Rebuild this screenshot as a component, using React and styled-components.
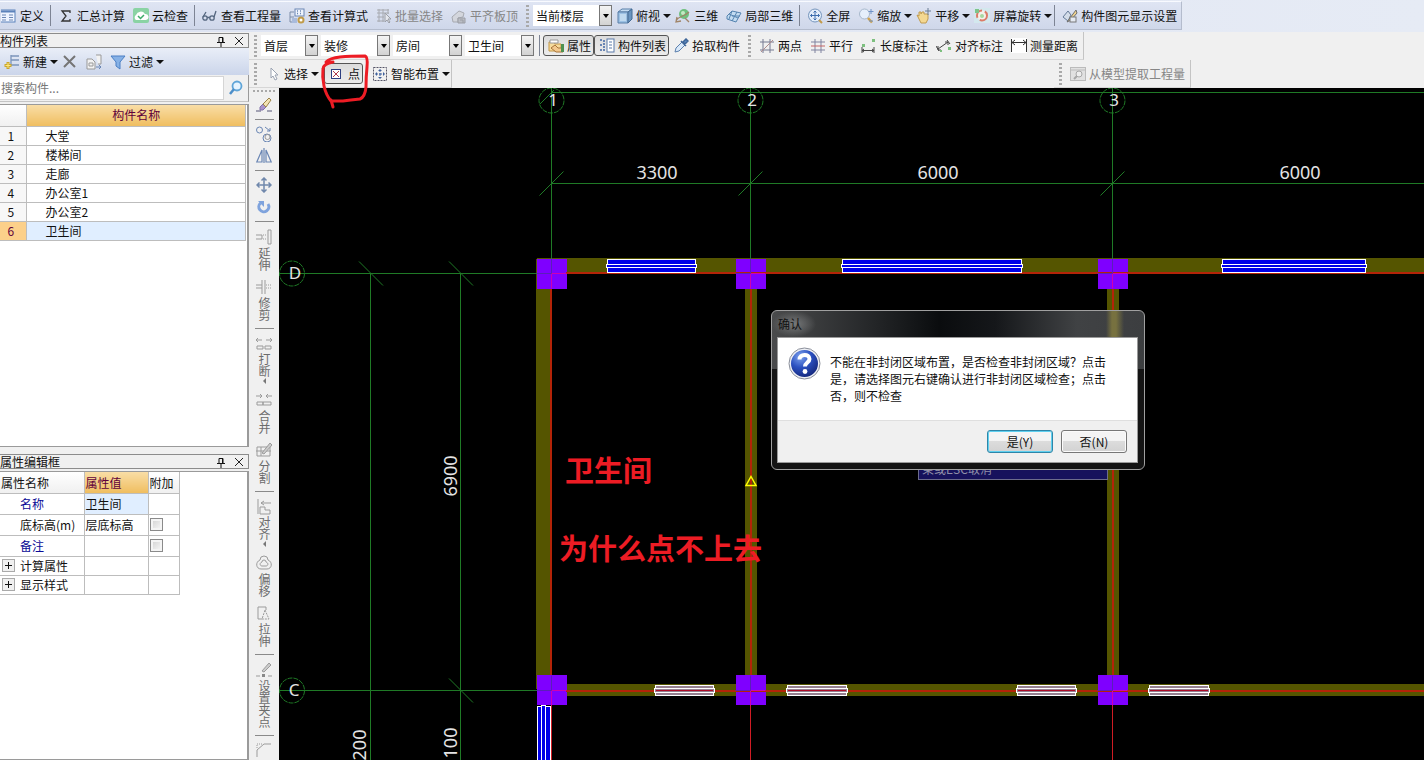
import React from "react"
import styled, { createGlobalStyle, css } from "styled-components";

const GlobalStyle = createGlobalStyle`
    * { box-sizing : border-box; }
    body {
        margin : 0;
        background : #f0f0f0;
    }
    body, button, input, select, table {
        font-family : "Noto Sans CJK SC", "Liberation Sans", sans-serif;
        font-size : 12px;
        line-height : 16px;
        color : #111;
    }
`;

const Window = styled.div`
    display : flex;
    flex-direction : column;
    height : 100vh;
    overflow : hidden;
`;

const Main = styled.div`
    display : flex;
    flex : 1;
    min-height : 0;
`;

const MenuStrip = styled.header`
    display : flex;
    padding : 1px 0 2px;
    background : linear-gradient(90deg, #dde3f2, #e6ebf5);
`;

const ViewBar = styled.div`
    display : flex;
    align-items : center;
    height : 29px;
    min-width : 0;
    margin-left : -3px;
    white-space : nowrap;
    background : linear-gradient(#dfe5f3, #cfd7ea);
    border-top : 1px solid #f8faff;
    border-right : 1px solid #b4bccd;
    border-bottom : 1px solid #b4bccd;
`;

const ToolItem = styled.button`
    display : flex;
    align-items : center;
    flex : none;
    gap : 3px;
    height : 24px;
    padding : 0 ${p => p.$menu ? "0" : "4px"} 0 4px;
    border : 0;
    background : none;
    white-space : nowrap;
    color : ${p => p.$off ? "#868686" : "#111"};
    svg { flex : none; opacity : ${p => p.$off ? 0.6 : 1}; }
    ${p => p.$down && css`
        height : 21px;
        padding : 0 2px 0 4px;
        border : 1px solid #555;
        border-radius : 3px;
        background : linear-gradient(#dcdcdc, #ececec);
    `}
`;

const Caret = styled.span`
    width : 0;
    height : 0;
    border : 4px solid transparent;
    border-width : 4px 4px 0;
    border-top-color : #111;
`;

const Divider = styled.span`
    flex : none;
    width : 1px;
    height : 21px;
    margin : 0 3px 0 2px;
    background : #7d8494;
`;

const Grip = styled.span`
    flex : none;
    width : 3px;
    height : 22px;
    margin : 0 4px;
    background : repeating-linear-gradient(#a9a9a9 0 2px, transparent 2px 4px);
`;

const Combo = styled.label`
    position : relative;
    display : block;
    flex : none;
    width : ${p => p.$short ? "57px" : "69px"};
    margin-right : 3px;
    select {
        appearance : none;
        display : block;
        width : 100%;
        height : 21px;
        padding : 0 14px 0 3px;
        border : 0;
        border-radius : 0;
        background : #fff;
    }
    span {
        position : absolute;
        top : 0;
        right : 0;
        width : 13px;
        height : 21px;
        display : flex;
        align-items : center;
        justify-content : center;
        border : 1px solid #777;
        background : linear-gradient(#f4f4f4, #d2d2d2);
        pointer-events : none;
    }
    i {
        border : 3px solid transparent;
        border-width : 4px 3px 0;
        border-top-color : #000;
    }
`;

const FloorCombo = styled(Combo)`
    width : 79px;
    margin-right : 1px;
`;

const Work = styled.div`
    display : flex;
    flex-direction : column;
    flex : 1;
    min-width : 0;
`;

const Row = styled.div`
    display : flex;
    align-items : center;
    flex : none;
    height : 28px;
    justify-content : space-between;
    padding-right : ${p => p.$inset ? "233px" : "0"};
`;

const Strip = styled.div`
    display : flex;
    align-items : center;
    height : 28px;
    padding : 0 1px;
    border-right : 1px solid #c4c4c4;
    border-bottom : 1px solid #d6d6d6;
`;

const Marked = styled.div`
    position : relative;
    margin : 0 5px;
`;

const RedMark = styled.svg`
    position : absolute;
    z-index : 2;
    top : -10px;
    left : -6px;
    pointer-events : none;
`;

const Stage = styled.div`
    display : flex;
    flex : 1;
    min-height : 0;
`;

const SideBar = styled.nav`
    display : flex;
    flex-direction : column;
    align-items : center;
    flex : none;
    width : 30px;
    overflow : hidden;
    padding-top : 2px;
`;

const SideGrip = styled.span`
    flex : none;
    width : 22px;
    height : 2px;
    margin-bottom : 2px;
    background : repeating-linear-gradient(90deg, #a9a9a9 0 2px, transparent 2px 4px);
`;

const SideItem = styled.button`
    display : flex;
    flex : none;
    align-items : center;
    gap : ${p => p.$menu ? "1px" : "2px"};
    padding : ${p => p.$plain ? "3px" : "4px"} 0;
    border : 0;
    background : none;
    writing-mode : vertical-rl;
    text-orientation : upright;
    color : #6c6c6c;
    svg { flex : none; }
`;

const SideCaret = styled.span`
    border : 2px solid transparent;
    border-width : 3px 3px 3px 0;
    border-right-color : #777;
`;

const SideLine = styled.span`
    flex : none;
    width : 19px;
    height : 1px;
    margin : 3px 0;
    background : #8a8a8a;
`;

const Docks = styled.aside`
    display : flex;
    flex-direction : column;
    flex : none;
    width : 249px;
    padding-top : 1px;
    gap : 7px;
`;

const Dock = styled.section`
    display : flex;
    flex-direction : column;
    flex : ${p => p.$grow ? "1" : "none"};
    height : ${p => p.$grow ? "auto" : "57%"};
    min-height : 0;
`;

const DockTitle = styled.div`
    display : flex;
    align-items : center;
    flex : none;
    height : 15px;
    border : 1px solid #8c8c8c;
    border-left : 0;
    h2 {
        flex : 1;
        margin : 0;
        font-size : 12px;
        font-weight : normal;
    }
`;

const TitleButton = styled.button`
    display : flex;
    padding : 0;
    margin-right : 3px;
    border : 0;
    background : none;
    & + & { margin-left : 3px; }
`;

const DockBar = styled.div`
    display : flex;
    align-items : center;
    flex : none;
    height : 27px;
    background : linear-gradient(#e9eef8, #cbd5ea);
`;

const Search = styled.div`
    display : flex;
    align-items : center;
    flex : none;
    height : 27px;
    border-right : 1px solid #9a9a9a;
    border-bottom : 1px solid #c4c4c4;
    input {
        flex : 1;
        min-width : 0;
        height : 24px;
        padding : 0 0 2px 1px;
        border : 1px solid #d5d5d5;
        border-left : 0;
    }
    input::placeholder { color : #777; opacity : 1; }
    button {
        display : flex;
        padding : 0 4px;
        border : 0;
        background : none;
    }
`;

const DockBody = styled.div`
    flex : 1;
    min-height : 0;
    overflow : hidden;
    background : #fff;
    border : 1px solid #9a9a9a;
    border-left : 0;
    border-right : 2px solid #9a9a9a;
    margin-top : 2px;
`;

const Grid = styled.table`
    border-collapse : collapse;
    table-layout : fixed;
    width : ${p => p.$wide ? "246px" : "179px"};
    th, td {
        height : 19px;
        padding : 0;
        border : 1px solid #bdbdbd;
        border-left : 0;
        font-weight : normal;
        text-align : left;
        white-space : nowrap;
    }
    thead th {
        height : 21px;
        padding-left : 1px;
        border-top : 0;
        background : linear-gradient(#fff, #f0f0f0);
    }
`;

const HotHead = styled.th`
    && {
        background : linear-gradient(#f9dda6, #efbe60);
        color : #60003a;
        text-align : ${p => p.$center ? "center" : "left"};
    }
`;

const NumCell = styled.th`
    && {
        padding-right : 4px;
        text-align : center;
        background : ${p => p.$on ? "#fcd08a" : "#f7f7f7"};
        color : ${p => p.$on ? "#60003a" : "#111"};
    }
`;

const NameCell = styled.td`
    && {
        padding-left : 19px;
        background : ${p => p.$on ? "#e0eeff" : "#fff"};
    }
`;

const PropRow = styled.tr`
    && td { height : ${p => p.$low ? "19px" : "21px"}; }
`;

const PropName = styled.td`
    color : ${p => p.$link ? "#0a0a96" : "#111"};
    div {
        display : flex;
        align-items : center;
        gap : 5px;
        padding-left : ${p => p.$tree ? "2px" : "20px"};
    }
`;

const PropValue = styled.td`
    && {
        padding-left : 1px;
        background : ${p => p.$on ? "#e0eeff" : "#fff"};
    }
`;

const Expand = styled.button`
    display : flex;
    padding : 0;
    border : 1px solid #aaa;
    background : #f0f0f0;
`;

const Check = styled.input`
    appearance : none;
    display : block;
    width : 13px;
    height : 13px;
    margin : 0 0 0 1px;
    border : 1px solid #8a8a8a;
    background : linear-gradient(135deg, #cfcfcf, #fafafa);
    box-shadow : inset 0 0 0 2px #f4f4f4;
`;

const Canvas = styled.main`
    position : relative;
    flex : 1;
    min-width : 0;
    overflow : hidden;
    background : #000;
`;

const Drawing = styled.svg`
    display : block;
    width : 100%;
    height : 100%;
    text { font-family : "Noto Sans", "Noto Sans CJK SC", sans-serif; }
`;

const Hint = styled.div`
    position : absolute;
    left : 639px;
    top : 368px;
    width : 190px;
    height : 24px;
    padding : 4px 3px 0;
    border : 1px solid #6c6c8c;
    background : #16125c;
    color : #8f8fa8;
    line-height : 16px;
`;

const Dialog = styled.div`
    position : absolute;
    left : 492px;
    top : 222px;
    width : 374px;
    padding : 0 6px 6px 5px;
    border : 1px solid #a0a0a0;
    border-radius : 6px;
    background :
        linear-gradient(90deg, transparent 334px, #77713f 340px, #77713f 344px, transparent 352px) 0 0 / 100% 27px no-repeat,
        linear-gradient(90deg, #4a4b4c, #232527 28%, #0a0c0e 45%, #15171a 60%, #404244 82%, #3c3e40) 0 0 / 100% 58px no-repeat,
        #141414;
`;

const DialogTitle = styled.h1`
    display : inline-block;
    margin : 0 -5px;
    padding : 5px 14px 5px 6px;
    height : 26px;
    font-size : 12px;
    font-weight : normal;
    border-radius : 12px;
    background : radial-gradient(closest-side, #77797a, transparent);
`;

const DialogBody = styled.div`
    border : 1px solid #9a9a9a;
    background : #f0f0f0;
`;

const Message = styled.div`
    display : flex;
    gap : 9px;
    padding : 9px 24px 16px 10px;
    background : #fff;
    border-bottom : 1px solid #dfdfdf;
    svg { flex : none; }
    p {
        margin : 6px 0 0;
        line-height : 17px;
    }
`;

const Actions = styled.div`
    display : flex;
    justify-content : flex-end;
    gap : 8px;
    padding : 9px 10px;
`;

const DialogButton = styled.button`
    width : 66px;
    height : 23px;
    padding : 0;
    border : 1px solid ${p => p.$main ? "#2f86a8" : "#777"};
    border-radius : 3px;
    background : linear-gradient(#f4f4f4 45%, #dcdcdc 50%, #d2d2d2);
    box-shadow : inset 0 0 0 1px ${p => p.$main ? "#5fd0f0" : "#fbfbfb"};
`;

const g = "#9b9b9b";
const b = "#6a86b4";

const icons = {
    define: <><rect x="-3" y="2" width="17" height="12" fill="#eef4ff" stroke="#5c83bb" /><path d="M-3 3.500H14" stroke="#5c83bb" strokeWidth="2" /><path d="M1 7h4M1 9.500h4M1 12h4M8 7h4M8 9.500h4M8 12h4" stroke={b} /></>,
    sum: <path d="M12 5V3H4l4 5-4 5h8v-2" fill="none" stroke="#333" strokeWidth="1.300" />,
    cloud: <><rect y="0" width="16" height="15" rx="2" fill="#8ad3a4" /><path d="M3 12a3 3 0 0 1 0-5 5 5 0 0 1 9-1 3 3 0 0 1 1 6z" fill="#fff" /><path d="M5 8l2.500 2.500L11 7" fill="none" stroke="#3caa68" strokeWidth="1.500" /></>,
    glasses: <g fill="none" stroke="#54667f" strokeWidth="1.300"><circle cx="3" cy="10" r="2.200" /><circle cx="10" cy="10" r="2.200" /><path d="M5.200 9.500h2.600M1 9l3-5M12 9l2-6" /></g>,
    formula: <><path d="M1 4v10M1 4h4M1 9h4M1 14h4" stroke="#7c8da8" fill="none" /><rect x="6" y="1" width="9" height="7" fill="#eef3fc" stroke={b} /><path d="M8 3h1M11 3h1M8 5.500h1M11 5.500h1" stroke={b} strokeWidth="1.500" /><rect x="3" y="10" width="5" height="5" fill="#a9bbdc" /><circle cx="12" cy="12" r="2.500" fill="#fff" stroke="#c09b49" strokeWidth="2" /></>,
    batch: <><path d="M1 2h12M1 5h12M1 9h7M1 13h7M3 1v13M7 1v13M12 1v5" stroke="#888" fill="none" /><path d="M9 5v9l2-2 2 3 1-1-2-3h3z" fill="#eee" stroke="#777" /></>,
    slab: <><path d="M1 9l7-6 5 2-1 4-5 1v4H2z" fill="#d2d2d2" stroke="#888" /><path d="M7 10h7v5H7zM9 12h3v3" fill="#aaa" stroke="#777" /></>,
    cube: <><path d="M1 4l4-3h10l-4 3z" fill="#c4dcf2" stroke="#587fa8" /><path d="M1 4h10v11H1z" fill="#9cc1e4" stroke="#587fa8" /><path d="M11 4l4-3v10l-4 4z" fill="#6a95c0" stroke="#446b93" /><path d="M3 6h6v7H3z" fill="#c0daf0" /></>,
    orbit: <><circle cx="9" cy="6" r="5" fill="#6fc07e" /><circle cx="8" cy="5" r="2" fill="#c4e9c4" /><path d="M1 13c2-5 8-4 13-9M2 9l-1 5 5-1M10 10l4 4" stroke="#a08468" strokeWidth="1.300" fill="none" /></>,
    local3d: <><path d="M1 8l5-5 9 2-5 9-9-3z" fill="#c3dcf2" stroke="#5684b0" /><path d="M3 6l9 4M6 3L3 11M11 4L6 13M6 8l8 0" stroke="#5684b0" fill="none" /></>,
    full: <><circle cx="8" cy="7.500" r="6.500" fill="#e3eefb" stroke="#7796bd" /><path d="M8 3v9M3.500 7.500h9M6.500 4.500L8 3l1.500 1.500M6.500 10.500L8 12l1.500-1.500M5 6L3.500 7.500 5 9M11 6l1.500 1.500L11 9" stroke="#3f6fae" fill="none" /><path d="M12 12l3 3" stroke="#c39a4a" strokeWidth="2" /></>,
    zoom: <><circle cx="6.500" cy="6" r="5" fill="#e6effb" stroke="#a8b8cc" /><path d="M10 10l4 4.500" stroke="#cfa24c" strokeWidth="2.500" /><path d="M13 1v5M10.500 3.500h5M11 13h4" stroke="#6f92c6" /></>,
    hand: <><path d="M1 7l2 1V4h2v2l1-2h2v2h4v5l-2 4H5z" fill="#f4d891" stroke="#c09b50" /><path d="M12 0v7M9 3h6" stroke="#6b7c93" /></>,
    rotate: <><rect width="16" height="15" fill="#d3e8ee" /><circle cx="8" cy="7.500" r="5" fill="#f4f1ea" stroke="#dc7b67" strokeWidth="2" strokeDasharray="10 3" /><circle cx="8" cy="8" r="2" fill="#a8d8a0" /><path d="M1 1h4v4H1z" fill="#7fc48b" /></>,
    display: <><path d="M1 9l5-6 3 4-3 6z" fill="#d4dde9" stroke="#667b98" /><path d="M5 14l9-12 1 3-6 7z" fill="#f0d38d" stroke="#6d6d6d" /><rect x="8" y="9" width="6" height="5" fill="#e5eaf2" stroke="#777" /></>,
    props: <><path d="M1 13V4h5l1 2h6v7z" fill="#f6dc9d" stroke="#c59742" /><path d="M2 2h8v3H2z" fill="#fff" stroke="#999" /><path d="M3 10l4-3 3 3h5v4H8z" fill="#f3c98e" stroke="#a8743a" /><path d="M13 6h3v8h-3z" fill="#4e9150" /></>,
    list: <><path d="M1 2h2M1 7h2M1 12h2M5 2v12" stroke={b} strokeWidth="2" strokeDasharray="2 1" /><rect x="8" y="1" width="7" height="13" fill="#fff" stroke="#5b7ba9" /><path d="M10 4h3M10 7h3M10 10h3" stroke="#5b7ba9" /></>,
    picker: <><path d="M2 14l1-4 6-6 3 3-6 6z" fill="#d9e9fa" stroke="#5c80ad" /><path d="M8 3l5 5M10 4l3-3 2 2-3 3z" stroke="#3d6598" fill="#5f8ac0" strokeWidth="1.500" /></>,
    twoPoint: <><path d="M4 1v14M11 1v14M1 4h14M1 12h14" stroke="#777a92" fill="none" /><path d="M2 14L14 2" stroke="#b08c8c" /></>,
    parallel: <><path d="M5 1v14M11 1v14M1 4h14M1 12h14" stroke="#8084a0" fill="none" /><path d="M1 8h14" stroke="#c46464" /></>,
    length: <><path d="M1 9v6M13 9v6M1 12.500h12M3 11l-2 1.500L3 14M11 11l2 1.500L11 14" stroke="#444" fill="none" /><path d="M1 6h3v3H1zM11 1h3v3h-3z" fill="#7dc07f" /></>,
    align: <><path d="M0 8l3 5M11 2l3 4M2 11l10-7M2 8v4h3M9 4h3v3" stroke="#444" fill="none" /><path d="M12 9h3v3h-3zM4 12h2v2H4z" fill="#7dc07f" /></>,
    measure: <><path d="M0 0h16v15H0z" fill="#fff" /><path d="M.5 1v13M15.500 1v13M1 4.500h14M4 2L1 4.500 4 7M12 2l3 2.500L12 7" stroke="#333" fill="none" /></>,
    cursor: <path d="M6 2v10l2-2 2 4 2-1-2-4h3z" fill="#fff" stroke="#9aa3b2" />,
    point: <><rect x="2.500" y="3.500" width="9" height="9" fill="#fff" stroke="#2e3f80" /><path d="M4 5l6 6M10 5l-6 6" stroke="#b03a4a" /></>,
    smart: <><rect x="1.500" y="1.500" width="13" height="13" fill="none" stroke="#556" strokeDasharray="2 1" /><path d="M8 3v10M3 8h10M6.500 4.500h3M6.500 11.500h3M4.500 6.500v3M11.500 6.500v3" stroke="#3d5f9b" strokeDasharray="3 1" /></>,
    model: <><rect x=".5" y="1.500" width="15" height="13" fill="#d8d8d8" stroke="#999" /><path d="M1 4h14" stroke="#999" /><circle cx="9" cy="8" r="3" fill="#eee" stroke="#777" /><path d="M7 10l-3 3" stroke="#777" strokeWidth="2" /></>,
    add: <><path d="M7 1v10M7 2h8M7 6h8M7 11h8" stroke="#7c95bb" fill="none" strokeWidth="1.300" /><path d="M4 8v7M.5 11.500h7" stroke="#caa62e" strokeWidth="3" /><path d="M4 9v5M1.500 11.500h5" stroke="#ffe97b" /></>,
    remove: <path d="M2 2l11 11M13 2L2 13" stroke="#757575" strokeWidth="2" />,
    copyPage: <><path d="M1 5h5l3 3v7H1zM10 1h5v9h-3" fill="#f2f2f2" stroke="#999" /><path d="M3 9h4v3H3z" fill="none" stroke="#999" /><path d="M10 13h4M13 11l2 2-2 2" stroke={b} fill="none" /></>,
    filter: <path d="M1 2h14l-5 6v7l-4-3V8z" fill="#86b1e6" stroke="#4a7fc4" />,
    find: <><circle cx="9" cy="6" r="4.500" fill="#e6f4ff" stroke="#5fa5d8" strokeWidth="1.800" /><path d="M6 9l-4 5" stroke="#4c8fca" strokeWidth="2.500" /></>,
    erase: <><path d="M0 14h5M11 14h5" stroke="#557" /><path d="M4 10l3-3 3 3-3 3H4z" fill="#a893cc" stroke="#8070a8" /><path d="M7 7l6-6 2 2-5 7z" fill="#f3e3b4" stroke="#9a8348" /></>,
    copy: <g fill="none" stroke={b}><circle cx="3.500" cy="4" r="3" /><circle cx="11" cy="12" r="4" /><circle cx="11.500" cy="11" r="2.500" stroke={g} /><path d="M9 1l5 4M14 2v3h-3" /></g>,
    mirror: <path d="M6 2v12H.800zM10 2v12h5.200zM8 0v15" fill="none" stroke={b} strokeWidth="1.200" />,
    move: <path d="M8 1v14M1 8h14M5.500 3.500L8 1l2.500 2.500M5.500 12.500L8 15l2.500-2.500M3.500 5.500L1 8l2.500 2.500M12.500 5.500L15 8l-2.500 2.500" fill="none" stroke="#7088ac" strokeWidth="1.500" />,
    spin: <><path d="M4.500 4a5 5 0 1 0 7.500 1" fill="none" stroke="#7fa3dd" strokeWidth="3" /><path d="M2 2h6v6z" fill="#7fa3dd" /></>,
    extend: <path d="M0 6h6v4H0M7 6h1M9 6h1M7 10h1M9 10h1M12 1h3v14h-3z" fill="none" stroke={g} />,
    trim: <path d="M6 1v14M9 1v14M0 6h6M0 9h6M10 6h1M12 6h1M14 6h1M10 9h1M12 9h1M14 9h1" fill="none" stroke={g} />,
    breakIt: <path d="M0 4h6M10 4h6M2 2L0 4l2 2M14 2l2 2-2 2M1 10h6v3H1zM9 10h6v3H9z" fill="none" stroke={g} />,
    merge: <path d="M0 4h6M10 4h6M4 2l2 2-2 2M12 2l-2 2 2 2M1 10h6v3H1zM7 10h8v3H7z" fill="none" stroke={g} />,
    split: <><path d="M1 5h13v9H1zM0 9h15M5 5v9" fill="none" stroke={g} /><path d="M6 11l8-10 2 2-8 9z" fill="#ccc" stroke={g} /></>,
    alignSide: <path d="M2 0v15M5 4h10M8 2L5 4l3 2M4 8h5v3h5v4H4z" fill="none" stroke={g} />,
    offset: <g fill="none" stroke={g}><path d="M4 5a4 4 0 0 1 8 0c5 2 4 9-1 9H5C0 14-1 7 4 5z" /><path d="M6 7a2 2 0 0 1 4 0c3 1 2 4 0 4H6c-2 0-3-3 0-4z" /></g>,
    stretch: <><path d="M2 14V2h8v3M2 14h4" fill="none" stroke={g} /><path d="M9 5l4 9H6z" fill="none" stroke={g} strokeDasharray="2 1" /></>,
    grip: <><path d="M0 14h4M12 14h4" stroke={g} /><path d="M6 9l7-8 2 2-7 7z" fill="#ccc" stroke={g} /><rect x="6" y="12" width="3" height="3" fill="#888" /></>,
    corner: <><path d="M1 15V8l7-6h7" fill="none" stroke={g} /><path d="M1 6V2h5" fill="none" stroke={g} strokeDasharray="1 1" /></>,
};

function Icon({ name }) {
    return <svg width="16" height="16" viewBox="0 0 16 16" aria-hidden="true">{icons[name]}</svg>
}

function Tool({ icon, text, menu, off, down }) {
    return (
        <ToolItem type="button" $menu={menu} $off={off} $down={down} disabled={off} aria-label={text || icon}>
            <Icon name={icon} />
            {text}
            {menu && <Caret />}
        </ToolItem>
    )
}

function Pick({ name, value, short, as: Box = Combo }) {
    return (
        <Box $short={short}>
            <select aria-label={name} defaultValue={value}>
                <option>{value}</option>
            </select>
            <span><i /></span>
        </Box>
    )
}

function Side({ icon, text, menu }) {
    return (
        <SideItem type="button" $plain={!text} $menu={menu} aria-label={text || icon}>
            <Icon name={icon} />
            {text}
            {menu && <SideCaret />}
        </SideItem>
    )
}

function DockHead({ title }) {
    return (
        <DockTitle>
            <h2>{title}</h2>
            <TitleButton type="button" aria-label="固定">
                <svg width="12" height="12" viewBox="0 0 12 12"><path d="M4 7V2.500h4V7M2 7.500h8M6 8v4M7.500 2v5" fill="none" stroke="#111" /></svg>
            </TitleButton>
            <TitleButton type="button" aria-label="关闭">
                <svg width="12" height="12" viewBox="0 0 12 12"><path d="M2 2l8 8M10 2l-8 8" stroke="#222" /></svg>
            </TitleButton>
        </DockTitle>
    )
}

const rooms = ["大堂", "楼梯间", "走廊", "办公室1", "办公室2", "卫生间"];

function ComponentList() {
    return (
        <Dock>
            <DockHead title="构件列表" />
            <DockBar>
                <Tool icon="add" text="新建" menu />
                <Tool icon="remove" />
                <Tool icon="copyPage" />
                <Tool icon="filter" text="过滤" menu />
            </DockBar>
            <Search>
                <input type="text" placeholder="搜索构件..." aria-label="搜索构件" />
                <button type="button" aria-label="搜索"><Icon name="find" /></button>
            </Search>
            <DockBody>
                <Grid $wide>
                    <colgroup><col width="26" /><col /></colgroup>
                    <thead>
                        <tr><th></th><HotHead $center>构件名称</HotHead></tr>
                    </thead>
                    <tbody>
                        {rooms.map((room, i) => (
                            <tr key={room}>
                                <NumCell $on={i === 5}>{i + 1}</NumCell>
                                <NameCell $on={i === 5}>{room}</NameCell>
                            </tr>
                        ))}
                    </tbody>
                </Grid>
            </DockBody>
        </Dock>
    )
}

const attrs = [
    { name: "名称", value: "卫生间", link: true, on: true },
    { name: "底标高(m)", value: "层底标高", check: true },
    { name: "备注", link: true, check: true },
    { name: "计算属性", tree: true },
    { name: "显示样式", tree: true },
];

function PropertyEditor() {
    return (
        <Dock $grow>
            <DockHead title="属性编辑框" />
            <DockBody>
                <Grid>
                    <colgroup><col width="84" /><col width="64" /><col width="31" /></colgroup>
                    <thead>
                        <tr><th>属性名称</th><HotHead>属性值</HotHead><th>附加</th></tr>
                    </thead>
                    <tbody>
                        {attrs.map(a => (
                            <PropRow key={a.name} $low={a.tree}>
                                <PropName $link={a.link} $tree={a.tree}>
                                    <div>
                                        {a.tree && (
                                            <Expand type="button" aria-label={a.name}>
                                                <svg width="11" height="11"><path d="M2 5.500h7M5.500 2v7" stroke="#111" /></svg>
                                            </Expand>
                                        )}
                                        {a.name}
                                    </div>
                                </PropName>
                                <PropValue $on={a.on}>{a.value}</PropValue>
                                <td>{a.check && <Check type="checkbox" aria-label={a.name} />}</td>
                            </PropRow>
                        ))}
                    </tbody>
                </Grid>
            </DockBody>
        </Dock>
    )
}

const axes = [[272.5, "1"], [471.5, "2"], [833.5, "3"]];
const rows = [[185.5, "D"], [602.5, "C"]];
const topWindows = [[328, 89], [563, 180], [943, 144]];
const lowWindows = [[376, 59], [508, 60], [738, 59], [870, 60]];

function Plan() {
    return (
        <Drawing>
            {/* 墙 */}
            <g fill="#555500">
                <rect x="258" y="170" width="2000" height="15" />
                <rect x="257" y="171" width="15" height="430" />
                <rect x="466" y="185" width="12" height="415" />
                <rect x="828" y="185" width="12" height="415" />
                <rect x="272" y="596" width="2000" height="12" />
            </g>
            {/* 轴网 */}
            <g stroke="#1f7a26" fill="none">
                <path d="M272 4.500H2000M272 95.500H2000M91.500 185V2000M181.500 185V2000" />
                {axes.map(([x, label]) => (
                    <g key={label}>
                        <circle cx={x} cy="12.500" r="12.500" strokeDasharray="5 1" />
                        <path d={`M${x} 0V171M${x - 12} 107.500l24-24`} />
                    </g>
                ))}
                {rows.map(([y, label]) => (
                    <g key={label}>
                        <circle cx="13" cy={y} r="12.500" strokeDasharray="5 1" />
                        <path d={`M0 ${y}H258M170 ${y - 12}l24 24`} />
                    </g>
                ))}
                <path d="M80 173.500l24 24M261 16l14-14" />
            </g>
            {/* 柱 */}
            {axes.map(([x]) => [171, 587].map(y => (
                <rect key={x + "-" + y} x={Math.floor(x) - 14} y={y} width="30" height="30" fill="#7f00ff" />
            )))}
            {/* 墙中线 */}
            <g stroke="#b42408" strokeWidth="2" fill="none">
                <path d="M287 185H2000M272 201V587M472 201V587M834 201V587M287 603H2000" />
                <path d="M272.500 617V2000M471.500 617V2000M833.500 617V2000" stroke="#d01c24" strokeWidth="1" />
            </g>
            {axes.map(([x]) => rows.map(([y]) => (
                <g key={x + "-" + y} fill="none">
                    <path d={`M${x} ${y}v15M${x} ${y}h15`} stroke="#d000b0" />
                    <path d={`M${x} ${y}v-15M${x} ${y}h-15`} stroke="#5a20b8" />
                </g>
            )))}
            {/* 窗 */}
            {topWindows.map(([x, w]) => (
                <g key={x} stroke="#fff">
                    <rect x={x + 0.5} y="171.500" width={w - 1} height="13" fill="#0000e8" />
                    <rect x={x - 0.5} y="176.500" width={w + 1} height="3" fill="#0000e8" />
                </g>
            ))}
            {lowWindows.map(([x, w]) => (
                <g key={x} stroke="#fff">
                    <rect x={x + 0.5} y="597.500" width={w - 1} height="10" fill="#957f90" />
                    <rect x={x - 0.5} y="600.500" width={w + 1} height="4" fill="#957f90" />
                    <path d={`M${x + 1} 602.500h${w - 2}`} stroke="#b00c28" />
                </g>
            ))}
            <g stroke="#fff" fill="#0000e8">
                <rect x="258.500" y="618.500" width="13" height="2000" />
                <rect x="262.500" y="617.500" width="4" height="2000" />
            </g>
            <path d="M472 388.500l5 9h-10z" fill="none" stroke="#ffff00" strokeWidth="1.500" />
            {/* 尺寸标注 */}
            <g fill="#e4e4e4" fontSize="18" textAnchor="middle">
                <text x="378" y="91">3300</text>
                <text x="659" y="91">6000</text>
                <text x="1021" y="91">6000</text>
                <text x="274" y="18" fontSize="17">1</text>
                <text x="473" y="18" fontSize="17">2</text>
                <text x="835" y="18" fontSize="17">3</text>
                <text x="16" y="191" fontSize="17">D</text>
                <text x="15" y="608" fontSize="17">C</text>
                <text transform="translate(178 388) rotate(-90)">6900</text>
                <text transform="translate(178 655) rotate(-90)">100</text>
                <text transform="translate(87 657) rotate(-90)">200</text>
            </g>
            <g fill="#ed1c24" fontSize="29" fontWeight="bold">
                <text x="286" y="394">卫生间</text>
                <text x="280" y="472">为什么点不上去</text>
            </g>
        </Drawing>
    )
}

function ConfirmDialog() {
    return (
        <Dialog role="dialog" aria-labelledby="confirm-title">
            <DialogTitle id="confirm-title">确认</DialogTitle>
            <DialogBody>
                <Message>
                    <svg width="33" height="33" viewBox="0 0 33 33">
                        <defs>
                            <radialGradient id="ball" cx="35%" cy="25%" r="80%">
                                <stop offset="0" stopColor="#7fa4ee" />
                                <stop offset=".5" stopColor="#2b50c0" />
                                <stop offset="1" stopColor="#14277c" />
                            </radialGradient>
                        </defs>
                        <circle cx="16.500" cy="16.500" r="15.500" fill="#eef0f5" stroke="#8b8f9a" />
                        <circle cx="16.500" cy="16.500" r="13.500" fill="url(#ball)" />
                        <path d="M11.500 12.500c0-6 10-6 10-.5 0 3.500-4.500 3.500-4.500 7.500" fill="none" stroke="#fff" strokeWidth="4" />
                        <circle cx="17" cy="24.500" r="2.400" fill="#fff" />
                    </svg>
                    <p>不能在非封闭区域布置，是否检查非封闭区域？点击是，请选择图元右键确认进行非封闭区域检查；点击否，则不检查</p>
                </Message>
                <Actions>
                    <DialogButton type="button" $main>是(Y)</DialogButton>
                    <DialogButton type="button">否(N)</DialogButton>
                </Actions>
            </DialogBody>
        </Dialog>
    )
}

function App() {
    return (
        <Window>
            <GlobalStyle />
            <MenuStrip>
                <ViewBar>
                    <Tool icon="define" text="定义" />
                    <Divider />
                    <Tool icon="sum" text="汇总计算" />
                    <Tool icon="cloud" text="云检查" />
                    <Divider />
                    <Tool icon="glasses" text="查看工程量" />
                    <Tool icon="formula" text="查看计算式" />
                    <Tool icon="batch" text="批量选择" off />
                    <Tool icon="slab" text="平齐板顶" off />
                    <Grip />
                    <Pick as={FloorCombo} name="楼层" value="当前楼层" />
                    <Tool icon="cube" text="俯视" menu />
                    <Tool icon="orbit" text="三维" />
                    <Tool icon="local3d" text="局部三维" />
                    <Divider />
                    <Tool icon="full" text="全屏" />
                    <Tool icon="zoom" text="缩放" menu />
                    <Tool icon="hand" text="平移" menu />
                    <Tool icon="rotate" text="屏幕旋转" menu />
                    <Divider />
                    <Tool icon="display" text="构件图元显示设置" />
                </ViewBar>
            </MenuStrip>
            <Main>
                <Docks>
                    <ComponentList />
                    <PropertyEditor />
                </Docks>
                <Work>
                    <Row>
                        <Strip>
                            <Grip />
                            <Pick name="首层" value="首层" short />
                            <Pick name="装修" value="装修" />
                            <Pick name="房间" value="房间" />
                            <Pick name="卫生间" value="卫生间" />
                            <Divider />
                            <Tool icon="props" text="属性" down />
                            <Tool icon="list" text="构件列表" down />
                            <Tool icon="picker" text="拾取构件" />
                            <Grip />
                            <Tool icon="twoPoint" text="两点" />
                            <Tool icon="parallel" text="平行" />
                            <Tool icon="length" text="长度标注" />
                            <Tool icon="align" text="对齐标注" />
                            <Tool icon="measure" text="测量距离" />
                        </Strip>
                    </Row>
                    <Row $inset>
                        <Strip>
                            <Grip />
                            <Tool icon="cursor" text="选择" menu />
                            <Marked>
                                <Tool icon="point" text="点" down />
                                <RedMark width="56" height="58" viewBox="0 0 56 58">
                                    <path d="M8 9Q12 5 22 4T47 3Q50 4 49 14T48 34Q47 44 42 46Q32 47 25 48H13Q8 42 6 33T5 16Q5 11 15 9M13 47l2 7" fill="none" stroke="#ed1c24" strokeWidth="3" strokeLinecap="round" strokeLinejoin="round" />
                                </RedMark>
                            </Marked>
                            <Tool icon="smart" text="智能布置" menu />
                        </Strip>
                        <Strip>
                            <Grip />
                            <Tool icon="model" text="从模型提取工程量" off />
                        </Strip>
                    </Row>
                    <Stage>
                        <SideBar>
                            <SideGrip />
                            <Side icon="erase" />
                            <SideLine />
                            <Side icon="copy" />
                            <Side icon="mirror" />
                            <SideLine />
                            <Side icon="move" />
                            <Side icon="spin" />
                            <SideLine />
                            <Side icon="extend" text="延伸" />
                            <Side icon="trim" text="修剪" />
                            <SideLine />
                            <Side icon="breakIt" text="打断" menu />
                            <Side icon="merge" text="合并" />
                            <Side icon="split" text="分割" />
                            <SideLine />
                            <Side icon="alignSide" text="对齐" menu />
                            <Side icon="offset" text="偏移" />
                            <Side icon="stretch" text="拉伸" />
                            <SideLine />
                            <Side icon="grip" text="设置夹点" />
                            <SideLine />
                            <Side icon="corner" />
                        </SideBar>
                        <Canvas>
                            <Plan />
                            <Hint>束或ESC取消</Hint>
                            <ConfirmDialog />
                        </Canvas>
                    </Stage>
                </Work>
            </Main>
        </Window>
    )
}

export default App;
